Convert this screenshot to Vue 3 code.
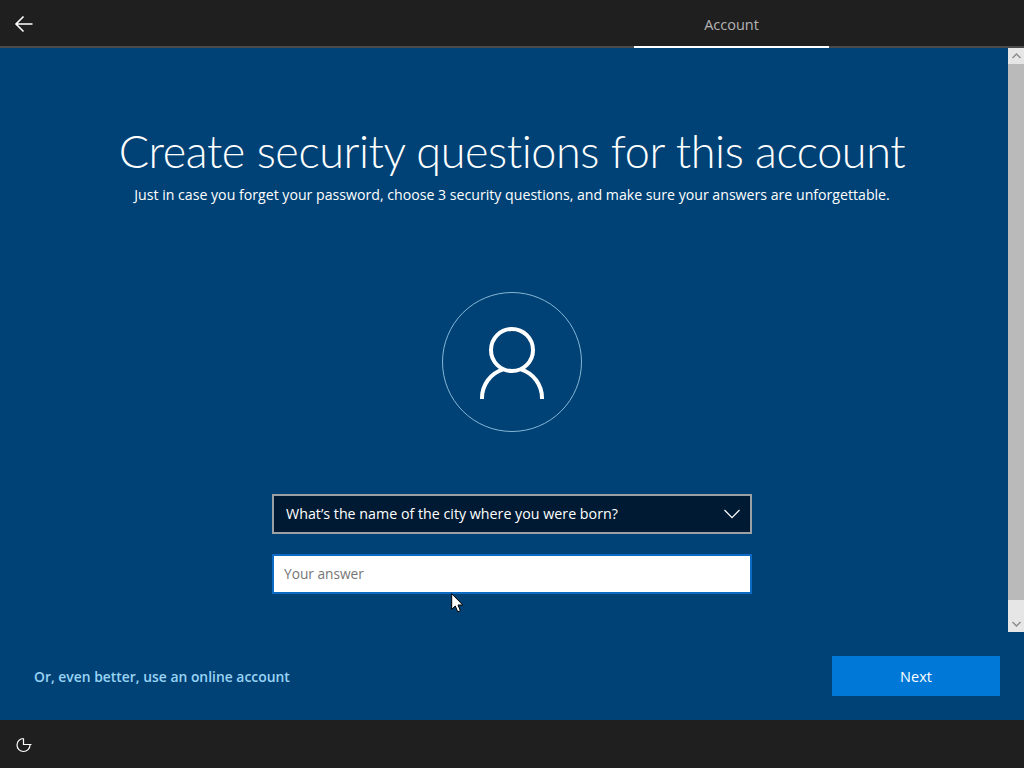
<template>
  <div class="page">
    <header class="topbar">
      <button class="back" aria-label="Back">
        <svg width="20" height="20" viewBox="0 0 20 20" fill="none" stroke="#fff" stroke-width="1.6">
          <path d="M18.500 10H2M9.500 2.500 2 10l7.500 7.500" />
        </svg>
      </button>
      <div class="tab">Account</div>
    </header>

    <main class="main">
      <div class="content">
        <h1>Create security questions for this account</h1>
        <p class="sub">Just in case you forget your password, choose 3 security questions, and make sure your answers are unforgettable.</p>

        <div class="avatar">
          <svg width="66" height="74" viewBox="0 0 66 74" fill="none" stroke="#fff" stroke-width="4">
            <circle cx="33" cy="25" r="21" />
            <path d="M3 74V73A30 30 0 0 1 24 44.400M63 74V73A30 30 0 0 0 42 44.400" />
          </svg>
        </div>

        <div class="select">
          <span class="select-label">What’s the name of the city where you were born?</span>
          <svg width="16" height="10" viewBox="0 0 16 10" fill="none" stroke="#fff" stroke-width="1.2">
            <path d="M.5 1 8 8.600 15.500 1" />
          </svg>
        </div>
        <input class="answer" type="text" placeholder="Your answer" />
      </div>

      <div class="actions">
        <a class="online" href="#">Or, even better, use an online account</a>
        <button class="next">Next</button>
      </div>

      <div class="scrollbar">
        <div class="arrow"><svg width="9" height="6" viewBox="0 0 9 6" fill="none" stroke="#8a8a8a" stroke-width="1.4"><path d="M.5 5 4.500 1l4 4" /></svg></div>
        <div class="thumb"></div>
        <div class="track"></div>
        <div class="arrow"><svg width="9" height="6" viewBox="0 0 9 6" fill="none" stroke="#8a8a8a" stroke-width="1.4"><path d="M.5 1l4 4 4-4" /></svg></div>
      </div>

      <svg class="cursor" width="13" height="20" viewBox="0 0 13 20">
        <path d="M.7.7V16.300L4.300 13l2.400 5.800 2.700-1.100L7 12h4.800Z" fill="#fff" stroke="#000" stroke-width="1" />
      </svg>
    </main>

    <footer class="bottombar">
      <svg width="16" height="16" viewBox="0 0 16 16" fill="none" stroke="#fff" stroke-width="1.2">
        <path d="M7.500 1.500V7.500H15.500M14 8A6.500 6.500 0 1 1 7.500 1.500" />
      </svg>
    </footer>
  </div>
</template>

<script setup>
</script>

<style>
html, body {
  margin: 0;
  overflow: hidden;
}
</style>

<style scoped>
.page {
  width: 1024px;
  height: 768px;
  display: flex;
  flex-direction: column;
  font-family: 'Open Sans', 'Liberation Sans', sans-serif;
  background: #004275;
  color: #fff;
}
.topbar {
  height: 46px;
  flex: none;
  display: flex;
  justify-content: space-between;
  background: #1f1f1f;
  border-bottom: 2px solid #4a4a4a;
}
.back {
  width: 48px;
  height: 48px;
  padding: 0;
  border: 0;
  background: none;
  display: flex;
  align-items: center;
  justify-content: center;
}
.tab {
  width: 195px;
  height: 43px;
  margin-right: 195px;
  padding-top: 3px;
  border-bottom: 2px solid #fff;
  display: flex;
  align-items: center;
  justify-content: center;
  font-size: 14.500px;
  color: #b4b4b4;
}
.main {
  flex: 1;
  position: relative;
  display: flex;
  flex-direction: column;
  justify-content: space-between;
}
.content {
  display: flex;
  flex-direction: column;
  align-items: center;
}
h1 {
  margin: 71px 0 0;
  font-family: Lato, 'Open Sans', sans-serif;
  font-weight: 300;
  font-size: 45px;
  letter-spacing: -0.43px;
  line-height: 64px;
  white-space: nowrap;
}
.sub {
  margin: 1px 0 0;
  font-size: 14.150px;
  line-height: 22px;
  white-space: nowrap;
}
.avatar {
  width: 138px;
  height: 138px;
  margin-top: 86px;
  border: 1px solid #86b6d8;
  border-radius: 50%;
  display: flex;
  align-items: center;
  justify-content: center;
}
.select {
  width: 480px;
  height: 40px;
  box-sizing: border-box;
  margin-top: 62px;
  padding: 0 10px 0 12px;
  border: 2px solid #9aa0a4;
  background: #001a33;
  display: flex;
  align-items: center;
  justify-content: space-between;
  font-size: 14.250px;
}
.select-label {
  padding-bottom: 2px;
}
.answer {
  width: 480px;
  height: 40px;
  box-sizing: border-box;
  margin-top: 20px;
  padding: 0 10px 2px;
  border: 2px solid #0a6ac4;
  border-radius: 0;
  outline: none;
  background: #fff;
  font-family: inherit;
  font-size: 13.700px;
}
.answer::placeholder {
  color: #767676;
  opacity: 1;
}
.actions {
  height: 88px;
  box-sizing: border-box;
  padding: 24px 24px 24px 34px;
  display: flex;
  align-items: center;
  justify-content: space-between;
}
.online {
  color: #99d4f5;
  font-size: 13.900px;
  font-weight: 600;
  text-decoration: none;
}
.next {
  width: 168px;
  height: 40px;
  border: 0;
  background: #0078d7;
  color: #fff;
  font-family: inherit;
  font-size: 14.500px;
}
.scrollbar {
  position: absolute;
  top: 0;
  right: 0;
  width: 16px;
  height: 584px;
  display: flex;
  flex-direction: column;
  background: #e6e6e6;
}
.arrow {
  height: 16px;
  flex: none;
  display: flex;
  align-items: center;
  justify-content: center;
}
.thumb {
  height: 536px;
  flex: none;
  background: #bababa;
}
.track {
  flex: 1;
}
.cursor {
  position: absolute;
  left: 451px;
  top: 545px;
}
.bottombar {
  height: 48px;
  flex: none;
  box-sizing: border-box;
  padding: 2px 0 0 16px;
  background: #1f1f1f;
  display: flex;
  align-items: center;
}
</style>
